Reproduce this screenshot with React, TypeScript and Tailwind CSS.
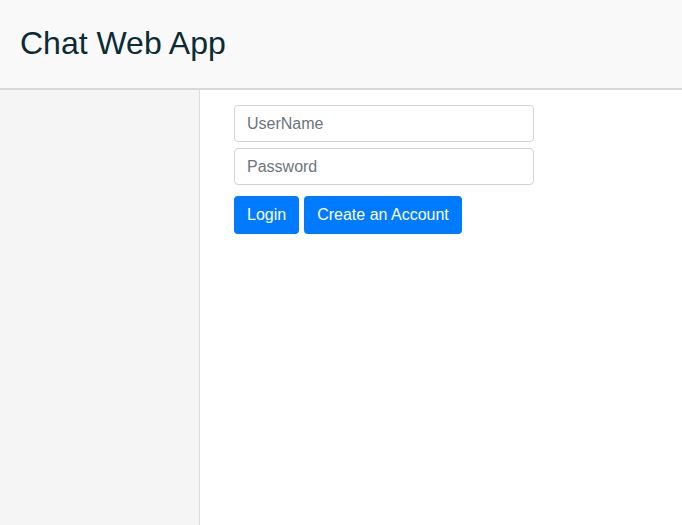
import React from "react";

export default function App() {
  return (
    <div className="flex h-[525px] w-full flex-col bg-white font-['Liberation_Sans',Arial,sans-serif]">
      <header className="flex h-[90px] shrink-0 items-center border-b-2 border-[#d9d9d9] bg-[#f9f9f9] pl-5 pb-[2px]">
        <h1 className="text-[32px] leading-none text-[#0b2b36]">Chat Web App</h1>
      </header>
      <div className="flex flex-1">
        <aside className="w-[200px] shrink-0 border-r border-[#dddddd] bg-[#f5f5f5]" />
        <main className="flex-1 pl-[34px] pt-[15px]">
          <div className="flex w-[300px] flex-col gap-[6px]">
            <input
              placeholder="UserName"
              className="h-[37px] w-full rounded-[4px] border border-[#ced4da] px-3 text-base text-[#495057] outline-none placeholder:text-[#6c757d]"
            />
            <input
              type="password"
              placeholder="Password"
              className="h-[37px] w-full rounded-[4px] border border-[#ced4da] px-3 text-base text-[#495057] outline-none placeholder:text-[#6c757d]"
            />
          </div>
          <div className="mt-[11px] flex gap-[5px]">
            <button className="h-[38px] rounded-[4px] bg-[#007bff] px-[13px] text-base text-white">Login</button>
            <button className="h-[38px] rounded-[4px] bg-[#007bff] px-[13px] text-base text-white">Create an Account</button>
          </div>
        </main>
      </div>
    </div>
  );
}
